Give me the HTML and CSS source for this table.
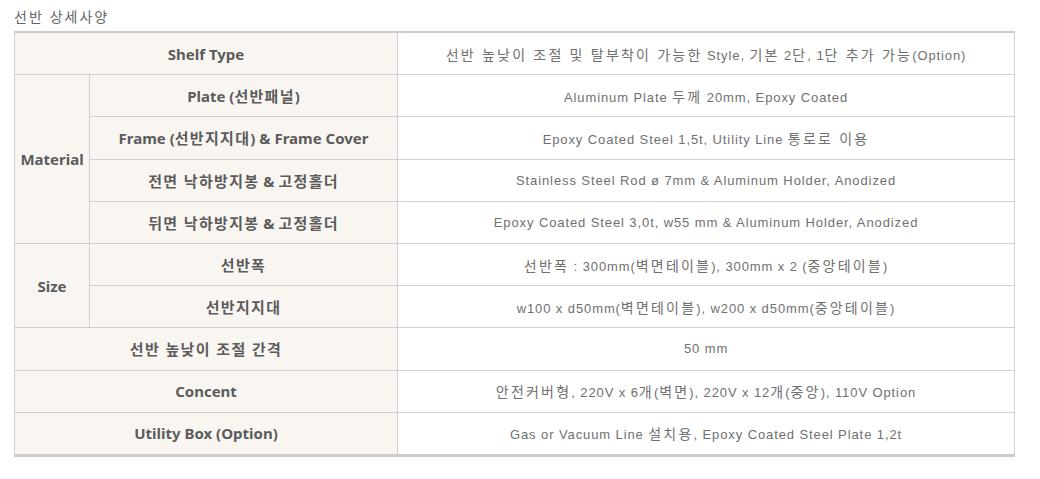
FILE: index.html
```html
<!DOCTYPE html>
<html lang="ko">
<head>
<meta charset="utf-8">
<link rel="stylesheet" href="styles.css">
</head>
<body>
<div class="page">
  <h2 class="title">선반 상세사양</h2>
  <table class="spec">
    <colgroup>
      <col class="c1"><col class="c2"><col class="c3">
    </colgroup>
    <tr><th colspan="2">Shelf Type</th><td><span class="k">선반 높낮이 조절 및 탈부착이 가능한</span> Style, <span class="k">기본</span> 2<span class="k">단</span>, 1<span class="k">단 추가 가능</span>(Option)</td></tr>
    <tr><th rowspan="4">Material</th><th>Plate (<span class="hk">선반패널</span>)</th><td>Aluminum Plate <span class="k">두께</span> 20mm, Epoxy Coated</td></tr>
    <tr><th>Frame (<span class="hk">선반지지대</span>) &amp; Frame Cover</th><td>Epoxy Coated Steel 1,5t, Utility Line <span class="k">통로로 이용</span></td></tr>
    <tr><th><span class="hk">전면 낙하방지봉</span> &amp; <span class="hk">고정홀더</span></th><td>Stainless Steel Rod ø 7mm &amp; Aluminum Holder, Anodized</td></tr>
    <tr><th><span class="hk">뒤면 낙하방지봉</span> &amp; <span class="hk">고정홀더</span></th><td>Epoxy Coated Steel 3,0t, w55 mm &amp; Aluminum Holder, Anodized</td></tr>
    <tr><th rowspan="2">Size</th><th><span class="hk">선반폭</span></th><td><span class="k">선반폭</span> : 300mm(<span class="k">벽면테이블</span>), 300mm x 2 (<span class="k">중앙테이블</span>)</td></tr>
    <tr><th><span class="hk">선반지지대</span></th><td>w100 x d50mm(<span class="k">벽면테이블</span>), w200 x d50mm(<span class="k">중앙테이블</span>)</td></tr>
    <tr><th colspan="2"><span class="hk">선반 높낮이 조절 간격</span></th><td>50 mm</td></tr>
    <tr><th colspan="2">Concent</th><td><span class="k">안전커버형</span>, 220V x 6<span class="k">개</span>(<span class="k">벽면</span>), 220V x 12<span class="k">개</span>(<span class="k">중앙</span>), 110V Option</td></tr>
    <tr><th colspan="2">Utility Box (Option)</th><td>Gas or Vacuum Line <span class="k">설치용</span>, Epoxy Coated Steel Plate 1,2t</td></tr>
  </table>
</div>
</body>
</html>
```
FILE: styles.css
```css
html, body {
  margin: 0;
  padding: 0;
  background: #fff;
}
.page {
  padding: 8px 0 0 14px;
}
.title {
  margin: 0 0 6px 0;
  font-family: "Noto Sans CJK KR", "Noto Sans", sans-serif;
  font-weight: normal;
  font-size: 14px;
  line-height: 17px;
  letter-spacing: 2px;
  color: #666;
}
.spec {
  width: 1000px;
  border-collapse: collapse;
  table-layout: fixed;
  border-top: 2px solid #cccccc;
  border-bottom: 3px solid #cccccc;
}
.c1 { width: 75px; }
.c2 { width: 308px; }
.c3 { width: 617px; }
.spec th, .spec td {
  border: 1px solid #d0d0d0;
  height: 41.2px;
  padding: 0;
  text-align: center;
  vertical-align: middle;
}
.spec th {
  background: #f9f6f2;
  font-family: "Noto Sans", "Noto Sans CJK KR", sans-serif;
  font-weight: bold;
  font-size: 15px;
  color: #5c5c5c;
}
.hk {
  font-family: "Noto Sans CJK KR", sans-serif;
  letter-spacing: 1.3px;
}
.spec td {
  background: #fff;
  font-family: "Liberation Sans", "Noto Sans CJK KR", sans-serif;
  font-size: 13px;
  letter-spacing: 0.9px;
  color: #707070;
}
.k {
  font-family: "Noto Sans CJK KR", sans-serif;
  font-size: 14px;
  letter-spacing: 2.2px;
}
```
